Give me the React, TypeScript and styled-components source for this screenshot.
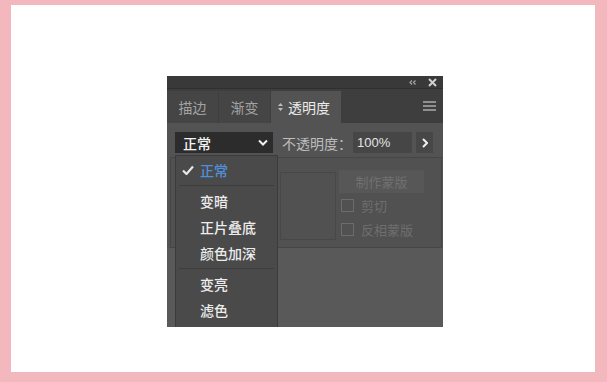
import React from "react";
import styled, { createGlobalStyle } from "styled-components";

const Global = createGlobalStyle`
  html, body { margin: 0; padding: 0; background: #f3b8be; }
  * { box-sizing: border-box; }
`;

const CJK = `"Noto Sans CJK SC", "Noto Sans", sans-serif`;

const Page = styled.div`
  width: 607px;
  height: 382px;
  padding: 5px 12px 10px 11px;
  background: #f3b8be;
`;

const Canvas = styled.div`
  width: 100%;
  height: 100%;
  background: #ffffff;
  padding: 71px 0 0 156px;
`;

const Panel = styled.div`
  width: 276px;
  height: 251px;
  display: flex;
  flex-direction: column;
  background: #535353;
  font-family: ${CJK};
  position: relative;
  overflow: hidden;
`;

const TitleBar = styled.div`
  height: 12px;
  background: #393939;
  display: flex;
  align-items: center;
  justify-content: flex-end;
  gap: 12px;
  padding-right: 6px;
`;

const TabBar = styled.div`
  height: 35px;
  background: #3e3e3e;
  display: flex;
  align-items: flex-end;
  border-top: 1px solid #2f2f2f;
`;

const Tab = styled.div<{ $active?: boolean; $w: number }>`
  width: ${(p) => p.$w}px;
  height: 32px;
  margin-right: 1px;
  display: flex;
  align-items: center;
  justify-content: ${(p) => (p.$active ? "flex-start" : "center")};
  padding-left: ${(p) => (p.$active ? 7 : 0)}px;
  gap: 5px;
  background: ${(p) => (p.$active ? "#535353" : "#454545")};
  color: ${(p) => (p.$active ? "#ececec" : "#a3a3a3")};
  font-size: 14px;
  line-height: 1;
`;

const Menu = styled.div`
  margin-left: auto;
  margin-right: 7px;
  align-self: center;
  display: flex;
  flex-direction: column;
  gap: 2px;
  width: 13px;
  span {
    display: block;
    height: 2px;
    background: #8f8f8f;
  }
`;

const Content = styled.div`
  flex: 1;
  display: flex;
  flex-direction: column;
  background: #535353;
`;

const Row = styled.div`
  display: flex;
  align-items: center;
  padding: 9px 0 0 8px;
  height: 30px;
`;

const Select = styled.div`
  width: 98px;
  height: 21px;
  background: #2c2c2c;
  color: #f2f2f2;
  font-size: 14px;
  font-weight: 500;
  display: flex;
  align-items: center;
  justify-content: space-between;
  padding: 0 5px 0 8px;
`;

const Label = styled.span`
  color: #bdbdbd;
  font-size: 14px;
  margin-left: 9px;
  white-space: nowrap;
`;

const Input = styled.div`
  width: 59px;
  height: 21px;
  margin-left: 1px;
  background: #464646;
  color: #e4e4e4;
  font-family: "Liberation Sans", Arial, sans-serif;
  font-size: 13px;
  display: flex;
  align-items: center;
  padding-left: 4px;
`;

const ArrowBtn = styled.div`
  width: 17px;
  height: 21px;
  margin-left: 4px;
  background: #474747;
  display: flex;
  align-items: center;
  justify-content: center;
`;

const Section = styled.div`
  margin: 4px 1px 0 3px;
  height: 91px;
  border: 1px solid #464646;
  background: #515151;
  display: flex;
  padding: 14px 0 0 109px;
  gap: 3px;
`;

const Thumb = styled.div`
  width: 56px;
  height: 68px;
  border: 1px solid #484848;
`;

const Options = styled.div`
  display: flex;
  flex-direction: column;
`;

const MaskButton = styled.div`
  width: 85px;
  height: 23px;
  margin-top: -2px;
  background: #575757;
  color: #707070;
  font-size: 13px;
  display: flex;
  align-items: center;
  justify-content: center;
`;

const Check = styled.div`
  display: flex;
  align-items: center;
  gap: 7px;
  height: 24px;
  color: #6e6e6e;
  font-size: 13px;
  padding-left: 2px;
`;

const Box = styled.span`
  width: 13px;
  height: 13px;
  border: 1px solid #6c6c6c;
`;

const Bottom = styled.div`
  flex: 1;
  background: #595959;
`;

const Dropdown = styled.div`
  position: absolute;
  left: 8px;
  top: 79px;
  width: 103px;
  height: 180px;
  background: #4a4a4a;
  border: 1px solid #3b3b3b;
  padding-top: 1px;
  display: flex;
  flex-direction: column;
`;

const Item = styled.div<{ $selected?: boolean }>`
  height: 26px;
  display: flex;
  align-items: center;
  padding-left: 24px;
  position: relative;
  font-size: 14px;
  font-weight: 500;
  color: ${(p) => (p.$selected ? "#4f8fda" : "#ededed")};
  svg {
    position: absolute;
    left: 6px;
    top: 8px;
  }
`;

const Sep = styled.div<{ $gap: number }>`
  height: 1px;
  background: #3d3d3d;
  margin: ${(p) => p.$gap}px 3px;
`;

export default function App() {
  return (
    <>
      <Global />
      <Page>
        <Canvas>
          <Panel>
            <TitleBar>
              <svg width="7" height="5" viewBox="0 0 7 5">
                <path d="M3 0.5 L1 2.5 L3 4.5 M6.5 0.5 L4.5 2.5 L6.5 4.5" stroke="#a8a8a8" strokeWidth="1.2" fill="none" />
              </svg>
              <svg width="9" height="9" viewBox="0 0 9 9">
                <path d="M1 1 L8 8 M8 1 L1 8" stroke="#d0d0d0" strokeWidth="2" />
              </svg>
            </TitleBar>
            <TabBar>
              <Tab $w={51}>描边</Tab>
              <Tab $w={51}>渐变</Tab>
              <Tab $w={70} $active>
                <svg width="5" height="8" viewBox="0 0 5 8">
                  <path d="M2.5 0 L5 3 L0 3 Z M2.5 8 L5 5 L0 5 Z" fill="#bdbdbd" />
                </svg>
                透明度
              </Tab>
              <Menu>
                <span />
                <span />
                <span />
              </Menu>
            </TabBar>
            <Content>
              <Row>
                <Select>
                  正常
                  <svg width="10" height="7" viewBox="0 0 10 7">
                    <path d="M1 1.5 L5 5.5 L9 1.5" stroke="#f0f0f0" strokeWidth="2" fill="none" />
                  </svg>
                </Select>
                <Label>不透明度：</Label>
                <Input>100%</Input>
                <ArrowBtn>
                  <svg width="6" height="10" viewBox="0 0 6 10">
                    <path d="M1 1 L5 5 L1 9" stroke="#f0f0f0" strokeWidth="2" fill="none" />
                  </svg>
                </ArrowBtn>
              </Row>
              <Section>
                <Thumb />
                <Options>
                  <MaskButton>制作蒙版</MaskButton>
                  <Check>
                    <Box />
                    剪切
                  </Check>
                  <Check>
                    <Box />
                    反相蒙版
                  </Check>
                </Options>
              </Section>
              <Bottom />
            </Content>
            <Dropdown>
              <Item $selected>
                <svg width="12" height="10" viewBox="0 0 12 10">
                  <path d="M1 5.5 L4.5 9 L11 1.5" stroke="#e8e8e8" strokeWidth="2.2" fill="none" />
                </svg>
                正常
              </Item>
              <Sep $gap={2} />
              <Item>变暗</Item>
              <Item>正片叠底</Item>
              <Item>颜色加深</Item>
              <Sep $gap={2} />
              <Item>变亮</Item>
              <Item>滤色</Item>
            </Dropdown>
          </Panel>
        </Canvas>
      </Page>
    </>
  );
}
